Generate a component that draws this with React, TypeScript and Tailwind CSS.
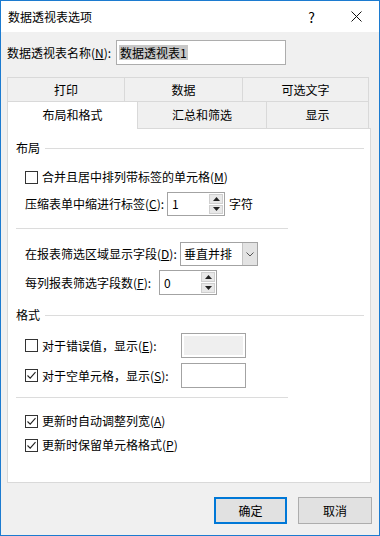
import React from "react";

const ROW1 = [
  { label: "打印", w: "w-[117px]" },
  { label: "数据", w: "w-[118px]" },
  { label: "可选文字", w: "w-[127px]" },
];

function Check({ checked }: { checked?: boolean }) {
  return (
    <span className="flex h-[13px] w-[13px] shrink-0 items-center justify-center border border-[#333333] bg-white">
      {checked && (
        <svg width="11" height="11" viewBox="0 0 11 11" fill="none">
          <path d="M1.5 5.5 L4.2 8.2 L9.5 2.2" stroke="#222" strokeWidth="1.1" />
        </svg>
      )}
    </span>
  );
}

function Spin({ value, h }: { value: string; h: string }) {
  return (
    <div className={`flex w-[58px] ${h} items-center border border-[#a3a3a3] bg-white`}>
      <span className="flex-1 pl-[4px] leading-[16px]">{value}</span>
      <div className="mr-[1px] flex h-full w-[14px] flex-col justify-center gap-[1px] py-[1px]">
        <div className="flex flex-1 items-center justify-center border border-[#cfcfcf] bg-[#e8e8e8]">
          <svg width="7" height="4" viewBox="0 0 7 4">
            <path d="M0 4 L3.5 0 L7 4 Z" fill="#222" />
          </svg>
        </div>
        <div className="flex flex-1 items-center justify-center border border-[#cfcfcf] bg-[#e8e8e8]">
          <svg width="7" height="4" viewBox="0 0 7 4">
            <path d="M0 0 L3.5 4 L7 0 Z" fill="#222" />
          </svg>
        </div>
      </div>
    </div>
  );
}

function Heading({ text, mt }: { text: string; mt: string }) {
  return (
    <div className={`${mt} flex h-[16px] items-center pl-[8px] pr-[6px]`}>
      <span className="leading-[16px]">{text}</span>
      <div className="ml-[5px] h-px flex-1 bg-[#dcdcdc]" />
    </div>
  );
}

export default function App() {
  return (
    <div className="flex h-[536px] w-[380px] flex-col border border-[#1c7bd0] bg-[#f0f0f0] font-['Noto_Sans_CJK_SC',sans-serif] text-[12px] text-black">
      {/* Title bar */}
      <div className="flex h-[31px] shrink-0 items-center bg-white">
        <span className="flex-1 pl-[7px] leading-[16px]">数据透视表选项</span>
        <span className="flex w-[45px] justify-center text-[14px] leading-[16px]">?</span>
        <span className="flex w-[45px] justify-center">
          <svg width="11" height="11" viewBox="0 0 11 11">
            <path d="M0.5 0.5 L10.5 10.5 M10.5 0.5 L0.5 10.5" stroke="#111" strokeWidth="1" />
          </svg>
        </span>
      </div>

      <div className="flex flex-1 flex-col px-[6px] pt-[8px]">
        {/* Name */}
        <div className="flex h-[25px] items-center">
          <span className="w-[109px] leading-[16px]">
            数据透视表名称(<span className="underline">N</span>):
          </span>
          <div className="flex h-[25px] w-[170px] items-center border border-[#adadad] bg-white pl-[2px]">
            <span className="bg-[#c8c8c8] px-[1px] leading-[15px]">数据透视表1</span>
          </div>
        </div>

        {/* Tabs */}
        <div className="mt-[12px] flex h-[24px]">
          {ROW1.map((t, i) => (
            <div
              key={t.label}
              className={`${t.w} flex items-center justify-center border-t border-l border-[#d9d9d9] ${i === 2 ? "border-r" : ""}`}
            >
              <span className="leading-[16px]">{t.label}</span>
            </div>
          ))}
        </div>
        <div className="flex h-[27px]">
          <div className="relative z-10 flex h-[28px] w-[131px] items-center justify-center border-t border-l border-r border-[#d9d9d9] bg-white pb-[2px]">
            <span className="leading-[16px]">布局和格式</span>
          </div>
          <div className="flex w-[128px] items-center justify-center border-t border-[#d9d9d9]">
            <span className="leading-[16px]">汇总和筛选</span>
          </div>
          <div className="flex w-[103px] items-center justify-center border-t border-l border-r border-[#d9d9d9]">
            <span className="leading-[16px]">显示</span>
          </div>
        </div>

        {/* Panel */}
        <div className="flex h-[355px] w-[364px] flex-col border border-[#d9d9d9] bg-white">
          <Heading text="布局" mt="mt-[11px]" />

          <div className="ml-[17px] mt-[13px] flex h-[16px] items-center gap-[4px]">
            <Check />
            <span className="leading-[16px]">
              合并且居中排列带标签的单元格(<span className="underline">M</span>)
            </span>
          </div>

          <div className="ml-[17px] mt-[7px] flex h-[24px] items-center">
            <span className="w-[142px] leading-[16px]">
              压缩表单中缩进行标签(<span className="underline">C</span>):
            </span>
            <Spin value="1" h="h-[24px]" />
            <span className="ml-[4px] leading-[16px]">字符</span>
          </div>

          <div className="ml-[8px] mt-[12px] h-px w-[272px] bg-[#dcdcdc]" />

          <div className="ml-[17px] mt-[13px] flex h-[24px] items-center">
            <span className="w-[155px] leading-[16px]">
              在报表筛选区域显示字段(<span className="underline">D</span>):
            </span>
            <div className="flex h-[24px] w-[78px] border border-[#a3a3a3] bg-white">
              <span className="flex flex-1 items-center pl-[3px] leading-[16px]">垂直并排</span>
              <span className="flex w-[15px] items-center justify-center border-l border-[#c4c4c4] bg-[#e3e3e3]">
                <svg width="8" height="5" viewBox="0 0 8 5" fill="none">
                  <path d="M0.5 0.5 L4 4 L7.5 0.5" stroke="#555" strokeWidth="1" />
                </svg>
              </span>
            </div>
          </div>

          <div className="ml-[17px] mt-[4px] flex h-[25px] items-center">
            <span className="w-[134px] leading-[16px]">
              每列报表筛选字段数(<span className="underline">F</span>):
            </span>
            <Spin value="0" h="h-[25px]" />
          </div>

          <Heading text="格式" mt="mt-[12px]" />

          <div className="ml-[17px] mt-[10px] flex h-[25px] items-center">
            <div className="flex w-[156px] items-center gap-[4px]">
              <Check />
              <span className="leading-[16px]">
                对于错误值，显示(<span className="underline">E</span>):
              </span>
            </div>
            <div className="h-[25px] w-[65px] border border-[#a3a3a3] bg-white p-[2px]">
              <div className="h-full w-full bg-[#efefef]" />
            </div>
          </div>

          <div className="ml-[17px] mt-[5px] flex h-[25px] items-center">
            <div className="flex w-[156px] items-center gap-[4px]">
              <Check checked />
              <span className="leading-[16px]">
                对于空单元格，显示(<span className="underline">S</span>):
              </span>
            </div>
            <div className="h-[25px] w-[65px] border border-[#a3a3a3] bg-white" />
          </div>

          <div className="ml-[8px] mt-[9px] h-px w-[272px] bg-[#dcdcdc]" />

          <div className="ml-[17px] mt-[15px] flex h-[16px] items-center gap-[4px]">
            <Check checked />
            <span className="leading-[16px]">
              更新时自动调整列宽(<span className="underline">A</span>)
            </span>
          </div>

          <div className="ml-[17px] mt-[8px] flex h-[16px] items-center gap-[4px]">
            <Check checked />
            <span className="leading-[16px]">
              更新时保留单元格格式(<span className="underline">P</span>)
            </span>
          </div>
        </div>

        {/* Buttons */}
        <div className="mr-[1px] mt-[14px] flex justify-end gap-[11px]">
          <button className="flex h-[27px] w-[73px] items-center justify-center border-2 border-[#0078d7] bg-[#e1e1e1]">
            <span className="leading-[16px]">确定</span>
          </button>
          <button className="flex h-[27px] w-[74px] items-center justify-center border border-[#adadad] bg-[#e1e1e1]">
            <span className="leading-[16px]">取消</span>
          </button>
        </div>
      </div>
    </div>
  );
}
